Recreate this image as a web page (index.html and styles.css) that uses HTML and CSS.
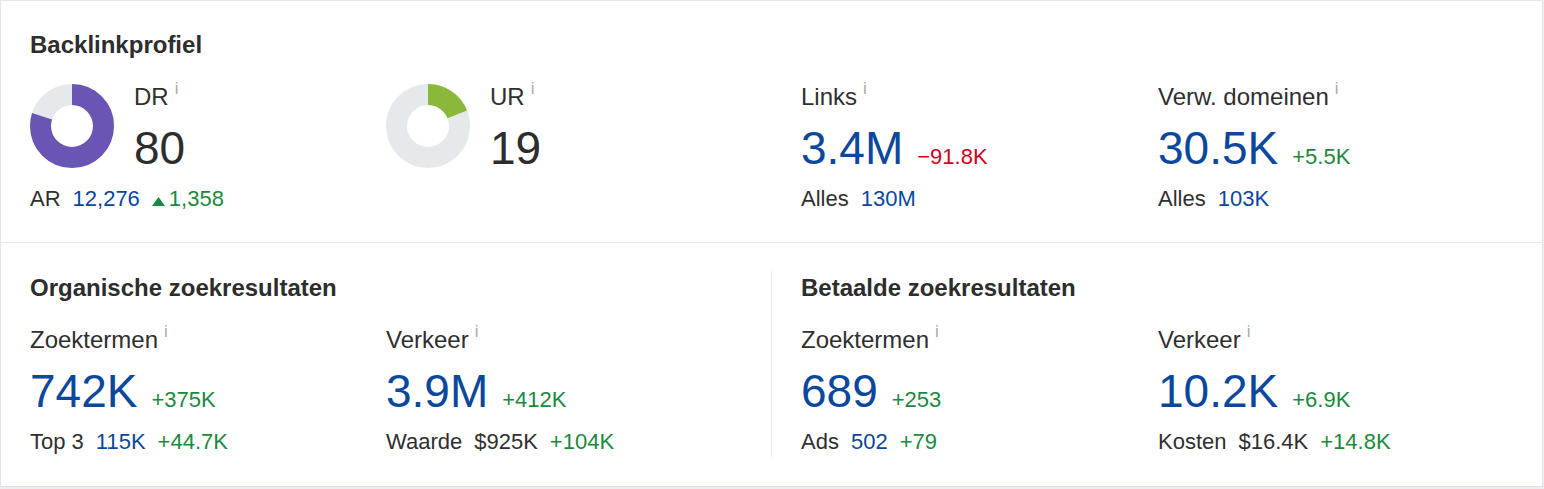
FILE: index.html
```html
<!DOCTYPE html>
<html lang="nl">
<head>
    <meta charset="UTF-8">
    <meta name="viewport" content="width=device-width, initial-scale=1.0">
    <title>Overzicht</title>
    <link rel="stylesheet" href="styles.css">
</head>
<body>
    <div class="card">
        <!-- backlinks -->
        <div class="section top">
            <h2 class="title">Backlinkprofiel</h2>
            <div class="metrics">
                <div class="metric">
                    <div class="rating">
                        <svg class="donut" width="84" height="84" viewBox="0 0 84 84">
                            <circle cx="42" cy="42" r="31.5" fill="none" stroke="#e6e9ec" stroke-width="21"/>
                            <circle cx="42" cy="42" r="31.5" fill="none" stroke="#6a55b4" stroke-width="21" pathLength="100" stroke-dasharray="80 100" transform="rotate(-90 42 42)"/>
                        </svg>
                        <div>
                            <div class="label">DR<span class="info">i</span></div>
                            <div class="value-row"><span class="value dark">80</span></div>
                        </div>
                    </div>
                    <div class="sub">
                        <span>AR</span>
                        <span class="num">12,276</span>
                        <span class="up"><svg class="arrow" width="13" height="9" viewBox="0 0 13 9"><polygon points="6.5,0 13,9 0,9" fill="#1a8a3e"/></svg>1,358</span>
                    </div>
                </div>
                <div class="metric">
                    <div class="rating">
                        <svg class="donut" width="84" height="84" viewBox="0 0 84 84">
                            <circle cx="42" cy="42" r="31.5" fill="none" stroke="#e6e9ec" stroke-width="21"/>
                            <circle cx="42" cy="42" r="31.5" fill="none" stroke="#8ab83b" stroke-width="21" pathLength="100" stroke-dasharray="19 100" transform="rotate(-90 42 42)"/>
                        </svg>
                        <div>
                            <div class="label">UR<span class="info">i</span></div>
                            <div class="value-row"><span class="value dark">19</span></div>
                        </div>
                    </div>
                </div>
                <div class="metric">
                    <div class="label">Links<span class="info">i</span></div>
                    <div class="value-row"><span class="value">3.4M</span><span class="delta down">&minus;91.8K</span></div>
                    <div class="sub"><span>Alles</span><span class="num">130M</span></div>
                </div>
                <div class="metric">
                    <div class="label">Verw. domeinen<span class="info">i</span></div>
                    <div class="value-row"><span class="value">30.5K</span><span class="delta up">+5.5K</span></div>
                    <div class="sub"><span>Alles</span><span class="num">103K</span></div>
                </div>
            </div>
        </div>

        <!-- search results -->
        <div class="section split">
            <div class="half">
                <h2 class="title">Organische zoekresultaten</h2>
                <div class="pair">
                    <div class="metric">
                        <div class="label">Zoektermen<span class="info">i</span></div>
                        <div class="value-row"><span class="value">742K</span><span class="delta up">+375K</span></div>
                        <div class="sub"><span>Top 3</span><span class="num">115K</span><span class="up">+44.7K</span></div>
                    </div>
                    <div class="metric">
                        <div class="label">Verkeer<span class="info">i</span></div>
                        <div class="value-row"><span class="value">3.9M</span><span class="delta up">+412K</span></div>
                        <div class="sub"><span>Waarde</span><span>$925K</span><span class="up">+104K</span></div>
                    </div>
                </div>
            </div>
            <div class="half right">
                <h2 class="title">Betaalde zoekresultaten</h2>
                <div class="pair">
                    <div class="metric">
                        <div class="label">Zoektermen<span class="info">i</span></div>
                        <div class="value-row"><span class="value">689</span><span class="delta up">+253</span></div>
                        <div class="sub"><span>Ads</span><span class="num">502</span><span class="up">+79</span></div>
                    </div>
                    <div class="metric">
                        <div class="label">Verkeer<span class="info">i</span></div>
                        <div class="value-row"><span class="value">10.2K</span><span class="delta up">+6.9K</span></div>
                        <div class="sub"><span>Kosten</span><span>$16.4K</span><span class="up">+14.8K</span></div>
                    </div>
                </div>
            </div>
        </div>
    </div>
</body>
</html>
```

FILE: styles.css
```css
body {
    margin: 0;
    background-color: #eceef1;
    color: #333;
    font-family: "Liberation Sans", Arial, sans-serif;
}
.card {
    box-sizing: border-box;
    width: 1543px;
    height: 487px;
    background: #fff;
    border: 1px solid #e6e6e6;
    border-bottom-color: #dcdfe3;
}
.section.top {
    padding: 30px 0 30px 29px;
    border-bottom: 1px solid #e8e8e8;
}
.title {
    margin: 0 0 24px;
    font-size: 24px;
    line-height: 28px;
    font-weight: bold;
    color: #2d2d2d;
}
.metrics {
    display: grid;
    grid-template-columns: 356px 415px 357px 1fr;
}
.rating {
    display: flex;
    align-items: flex-start;
}
.donut {
    margin: 1px 20px 0 0;
    flex: none;
}
.label {
    height: 28px;
    font-size: 24px;
    line-height: 28px;
    color: #2f2f2f;
    white-space: nowrap;
}
.info {
    font-size: 17px;
    line-height: 0;
    margin-left: 6px;
    vertical-align: 11px;
    color: #aaa;
}
.value-row {
    display: flex;
    align-items: baseline;
    gap: 14px;
    margin-top: 11px;
    height: 52px;
}
.value {
    font-size: 46px;
    line-height: 52px;
    color: #0b479d;
}
.value.dark {
    color: #2d2d2d;
}
.delta {
    font-size: 22px;
}
.sub {
    display: flex;
    align-items: baseline;
    gap: 12px;
    margin-top: 12px;
    font-size: 22px;
    line-height: 26px;
    color: #2f2f2f;
    white-space: nowrap;
}
.num {
    color: #0b479d;
}
.up {
    color: #1a8a3e;
}
.down {
    color: #d0021b;
}
.arrow {
    margin-right: 4px;
}
.split {
    display: flex;
    padding: 28px 0;
}
.half {
    box-sizing: border-box;
    width: 770px;
    padding: 3px 0 2px 29px;
}
.half.right {
    flex: 1;
    border-left: 1px solid #e8e8e8;
}
.pair {
    display: grid;
    grid-template-columns: 356px 1fr;
}
.right .pair {
    grid-template-columns: 357px 1fr;
}
```
